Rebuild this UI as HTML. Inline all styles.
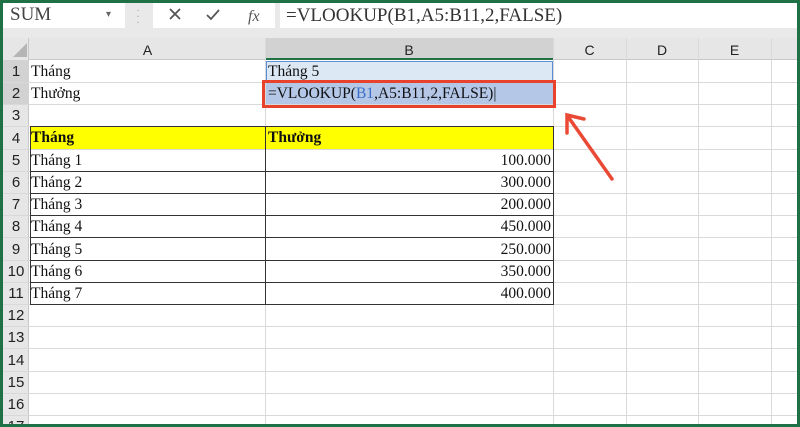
<!DOCTYPE html>
<html><head><meta charset="utf-8"><style>
*{margin:0;padding:0;box-sizing:border-box}
body{width:800px;height:427px;overflow:hidden;background:#1e7145;position:relative;font-family:"Liberation Serif",serif}
#in{position:absolute;left:3px;top:3px;width:794px;height:421px;background:#e9e9e9;overflow:hidden}
.abs{position:absolute}
.hdr{font-family:"Liberation Sans",sans-serif;font-size:14px;color:#222;text-align:center}
.vl{position:absolute;width:1px;background:#d9d9d9}
.hl{position:absolute;height:1px;background:#d9d9d9}
.t{position:absolute;font-size:15.5px;color:#111;white-space:nowrap}
</style></head><body>
<div id="in">
 <div class="abs" style="left:0;top:0;width:122px;height:25px;background:#fff"></div>
 <div class="abs" style="left:7px;top:1px;font-family:'Liberation Serif',serif;font-size:19px;color:#444">SUM</div>
 <div class="abs" style="left:103px;top:6px;font-size:10px;color:#666">▾</div>
 <div class="abs" style="left:133px;top:4px;color:#aaa;font-size:12px;line-height:6px">·<br>·<br>·</div>
 <div class="abs" style="left:150px;top:0;width:122px;height:25px;background:#fff"></div>
 <svg class="abs" style="left:150px;top:0" width="122" height="25"><g stroke="#555" stroke-width="1.8" fill="none"><path d="M17 6l10 10M27 6l-10 10"/><path d="M54 12l4 4 8-9"/></g><text x="95" y="18" font-family="Liberation Serif" font-style="italic" font-size="16" fill="#555">fx</text></svg>
 <div class="abs" style="left:277px;top:0;width:517px;height:25px;background:#fff"></div>
 <div class="abs" style="left:283px;top:2px;font-size:19px;color:#333">=VLOOKUP(B1,A5:B11,2,FALSE)</div>
 <div class="abs" style="left:0;top:35px;width:794px;height:400px;background:#fff"></div>
 <div class="abs" style="left:0;top:35px;width:794px;height:22px;background:#e6e6e6;border-bottom:1px solid #c8c8c8"></div>
 <div class="abs" style="left:0;top:35px;width:26px;height:400px;background:#e6e6e6;border-right:1px solid #c8c8c8"></div>
 <div class="abs" style="left:262px;top:35px;width:288px;height:22px;background:#d2d2d2;border-bottom:2px solid #217346"></div>
 <div class="abs" style="left:0;top:79px;width:26px;height:22px;background:#d2d2d2"></div>
 <div class="abs" style="left:0;top:57px;width:26px;height:22px;background:#d2d2d2"></div>
 <svg class="abs" style="left:10px;top:40px" width="14" height="14"><path d="M14 0V14H0Z" fill="#b5b5b5"/></svg>
 <div class="hdr abs" style="left:27px;top:39px;width:235px">A</div>
 <div class="hdr abs" style="left:262px;top:39px;width:288px">B</div>
 <div class="hdr abs" style="left:550px;top:39px;width:73px">C</div>
 <div class="hdr abs" style="left:623px;top:39px;width:72px">D</div>
 <div class="hdr abs" style="left:695px;top:39px;width:73px">E</div>
 <div class="vl" style="left:262px;top:35px;height:400px"></div>
 <div class="vl" style="left:550px;top:35px;height:400px"></div>
 <div class="vl" style="left:623px;top:35px;height:400px"></div>
 <div class="vl" style="left:695px;top:35px;height:400px"></div>
 <div class="vl" style="left:768px;top:35px;height:400px"></div>
 <div id="rows"></div>
 <div class="abs" style="left:27px;top:124px;width:524px;height:22px;background:#ffff00"></div>
 <div class="abs" style="left:27px;top:123px;width:524px;height:179px;border:1px solid #333;border-bottom:none"></div>
 <div class="abs" style="left:262px;top:123px;width:1px;height:179px;background:#333"></div>
 <div class="abs" style="left:263px;top:58px;width:287px;height:21px;background:#dde8f5;border:1px solid #5b8ed6;border-bottom:none"></div>
 <div class="abs" style="left:263px;top:80px;width:287px;height:21px;background:#b4c7e7"></div>
 <div class="abs" style="left:259px;top:77px;width:294px;height:28px;border:3px solid #e8412c"></div>
 <div class="t" style="left:28px;top:60px">Tháng</div>
 <div class="t" style="left:28px;top:82px">Thưởng</div>
 <div class="t" style="left:265px;top:60px">Tháng 5</div>
 <div class="t" style="left:265px;top:82px">=VLOOKUP(<span style="color:#3a6ec9">B1</span>,A5:B11,2,FALSE)|</div>
 <div class="t" style="left:28px;top:126px;font-weight:bold">Tháng</div>
 <div class="t" style="left:265px;top:126px;font-weight:bold">Thưởng</div>
 <svg class="abs" style="left:550px;top:100px" width="70" height="85"><g stroke="#ea4a35" stroke-width="3.5" fill="none" stroke-linecap="round"><path d="M59 76L16 15"/><path d="M14 30L14 12 31 16"/></g></svg>
</div>
<script>
var r=document.getElementById('rows'),h='';
var A=['','','','','Tháng 1','Tháng 2','Tháng 3','Tháng 4','Tháng 5','Tháng 6','Tháng 7'];
var B=['','','','','100.000','300.000','200.000','450.000','250.000','350.000','400.000'];
for(var i=0;i<17;i++){var y=57+i*22.2;
h+='<div class="hl" style="left:0;top:'+(y+22)+'px;width:794px"></div>';
h+='<div class="hdr abs" style="left:0;top:'+(y+3)+'px;width:26px;font-size:15px">'+(i+1)+'</div>';
if(i>=4&&i<=10){h+='<div class="abs" style="left:27px;top:'+(y+22)+'px;width:524px;height:1px;background:#333"></div>';
h+='<div class="t" style="left:28px;top:'+(y+3)+'px">'+A[i]+'</div>';
h+='<div class="t" style="left:262px;width:286px;text-align:right;top:'+(y+3)+'px">'+B[i]+'</div>';}}
r.innerHTML=h;
</script>
</body></html>
